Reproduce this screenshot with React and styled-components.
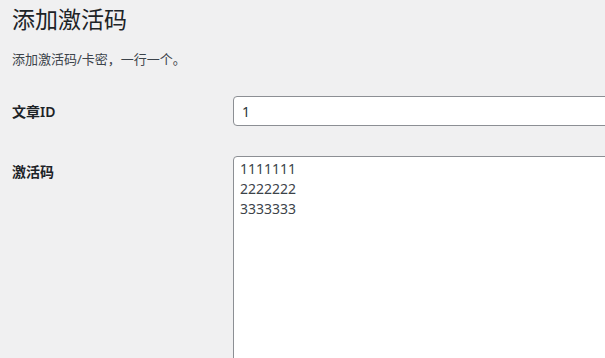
import styled, { createGlobalStyle } from "styled-components";

const GlobalStyle = createGlobalStyle`
  html, body {
    margin: 0;
    padding: 0;
    overflow: hidden;
    background: #f0f0f1;
  }
  body {
    font-family: "Segoe UI", "Noto Sans", "Noto Sans CJK SC", sans-serif;
    color: #1d2327;
  }
`;

const Wrap = styled.div`
  padding-left: 12px;
`;

const Title = styled.h1`
  margin: 0;
  padding: 5px 0 4px;
  font-size: 23px;
  font-weight: 400;
  line-height: 1.3;
  color: #1d2327;
`;

const Description = styled.p`
  margin: 11px 0 0;
  font-size: 13px;
  line-height: 1.5;
  color: #3c434a;
`;

const Form = styled.div`
  margin-top: 12px;
  display: flex;
  flex-direction: column;
`;

const Row = styled.div`
  display: flex;
  align-items: flex-start;
`;

const Label = styled.label`
  flex: none;
  width: 201px;
  padding: 20px 10px 18px 0;
  font-size: 14px;
  font-weight: 600;
  line-height: 22px;
  color: #1d2327;
`;

const Field = styled.div`
  flex: none;
  padding: 15px 10px;
`;

const TextInput = styled.input`
  box-sizing: border-box;
  width: 420px;
  height: 30px;
  padding: 0 8px;
  border: 1px solid #8c8f94;
  border-radius: 4px;
  background: #fff;
  font-family: inherit;
  font-size: 14px;
  color: #2c3338;
  outline: none;
`;

const CodeArea = styled.textarea`
  box-sizing: border-box;
  width: 420px;
  height: 240px;
  padding: 2px 6px;
  border: 1px solid #8c8f94;
  border-radius: 4px;
  background: #fff;
  font-family: inherit;
  font-size: 14px;
  line-height: 20px;
  color: #3c434a;
  resize: none;
  outline: none;
`;

export default function App() {
  return (
    <>
      <GlobalStyle />
      <Wrap>
        <Title>添加激活码</Title>
        <Description>添加激活码/卡密，一行一个。</Description>
        <Form>
          <Row>
            <Label>文章ID</Label>
            <Field>
              <TextInput defaultValue="1" />
            </Field>
          </Row>
          <Row>
            <Label>激活码</Label>
            <Field>
              <CodeArea defaultValue={"1111111\n2222222\n3333333"} />
            </Field>
          </Row>
        </Form>
      </Wrap>
    </>
  );
}
